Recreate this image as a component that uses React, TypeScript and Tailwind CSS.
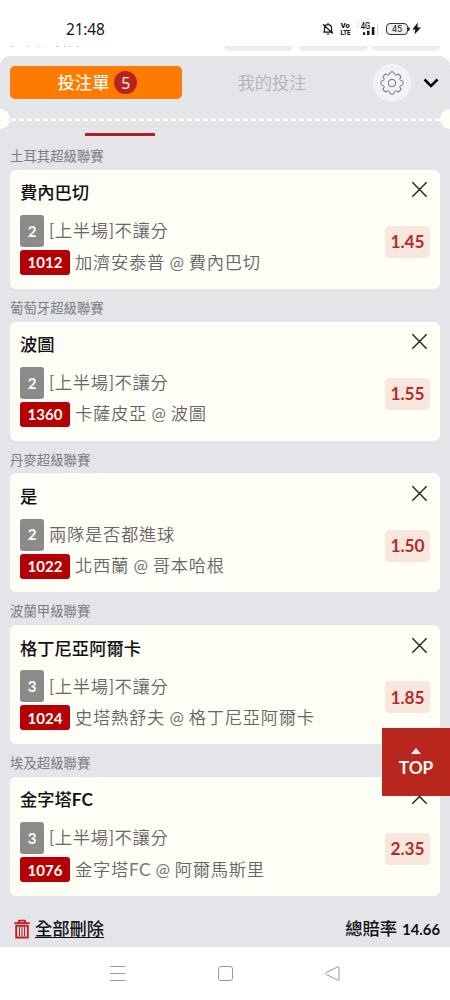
import React from "react";

type Bet = {
  league: string;
  pick: string;
  count: number;
  market: string;
  code: string;
  match: string;
  odds: string;
};

const bets: Bet[] = [
  { league: "土耳其超級聯賽", pick: "費內巴切", count: 2, market: "[上半場]不讓分", code: "1012", match: "加濟安泰普 @ 費內巴切", odds: "1.45" },
  { league: "葡萄牙超級聯賽", pick: "波圖", count: 2, market: "[上半場]不讓分", code: "1360", match: "卡薩皮亞 @ 波圖", odds: "1.55" },
  { league: "丹麥超級聯賽", pick: "是", count: 2, market: "兩隊是否都進球", code: "1022", match: "北西蘭 @ 哥本哈根", odds: "1.50" },
  { league: "波蘭甲級聯賽", pick: "格丁尼亞阿爾卡", count: 3, market: "[上半場]不讓分", code: "1024", match: "史塔熱舒夫 @ 格丁尼亞阿爾卡", odds: "1.85" },
  { league: "埃及超級聯賽", pick: "金字塔FC", count: 3, market: "[上半場]不讓分", code: "1076", match: "金字塔FC @ 阿爾馬斯里", odds: "2.35" },
];

// Latin runs take their own weight beside the Chinese text.
function Mixed({ text, latin }: { text: string; latin: string }) {
  return (
    <>
      {text.split(/([\x21-\x7e]+)/).map((part, i) =>
        i % 2 ? (
          <span key={i} className={latin}>
            {part}
          </span>
        ) : (
          part
        ),
      )}
    </>
  );
}

function StatusBar() {
  return (
    <div className="flex h-[46px] shrink-0 items-start bg-white pt-[19px] pl-[66px] text-[#171717]">
      <span className="w-[256px] font-['Noto_Sans','Noto_Sans_CJK_TC',sans-serif] text-[15.5px] leading-5 tracking-[-0.2px]">21:48</span>
      <svg className="mt-[3px] h-[14px] w-[12px]" viewBox="0 0 12 14" fill="none" stroke="currentColor" strokeWidth="1.2">
        <path d="M1.2 10.2h9.6M2.5 9.8V6.2C2.5 4 4 2.6 6 2.6s3.5 1.4 3.5 3.6v3.6M6 2.5V1M4.7 12h2.6M1 2.2l9.8 9.3" />
      </svg>
      <svg className="mt-[3px] ml-[6px] h-[17px] w-[11px] overflow-visible" viewBox="0 0 11 17" fill="currentColor" fontFamily="Roboto" fontWeight="900" fontSize="8">
        <text x="0.8" y="6.3" textLength="9" lengthAdjust="spacingAndGlyphs">Vo</text>
        <text x="0.5" y="13" textLength="10" lengthAdjust="spacingAndGlyphs">LTE</text>
      </svg>
      <svg className="mt-[2px] ml-[5px] h-[16px] w-[24px]" viewBox="0 0 24 16">
        <text x="4.8" y="7.6" fontFamily="Roboto" fontSize="9" fontWeight="500" fill="currentColor" textLength="9.5" lengthAdjust="spacingAndGlyphs">4G</text>
        <path d="M7 11.3h2.2V14H7zM11 9.7h2.5V14H11zM15.8 6h2.6v8h-2.6z" fill="currentColor" />
        <path d="M21 3h1v11h-1zM0 2.5h3v.8H0zM0 5h3v.8H0z" fill="#d0d0d0" />
      </svg>
      <div className="mt-[4px] ml-[6px] flex h-[12px] w-[22px] items-center justify-center rounded-[4px] border border-[#333] bg-[#eee] font-['Roboto',sans-serif] text-[9px] leading-none">45</div>
      <div className="mt-[8px] h-[4px] w-[1.5px] rounded-r bg-[#333]" />
      <svg className="mt-[3px] ml-[2px] h-[13px] w-[9px]" viewBox="0 0 9 13" fill="currentColor">
        <path d="M5.8.5.3 7.4h3L2.5 12.5 9 5.4H5.5z" />
      </svg>
    </div>
  );
}

function Gear() {
  return (
    <svg className="size-[24px]" viewBox="-12 -12 24 24" fill="none" stroke="#707278" strokeWidth="1" strokeLinejoin="round">
      {[0, 45, 90, 135, 180, 225, 270, 315].map((angle) => (
        <path key={angle} transform={`rotate(${angle})`} d="M-3.37-8.13Q-2.6-8.3-2.4-9L-2-10.5Q-1.8-11-1.3-11H1.3Q1.8-11 2-10.5L2.4-9Q2.6-8.3 3.37-8.13" />
      ))}
      <circle r="3.7" />
    </svg>
  );
}

function BetCard({ bet }: { bet: Bet }) {
  return (
    <section className="h-[151.8px]">
      <h3 className="h-[32.8px] pt-[9px] text-[13.4px] leading-[20px] text-[#7b7c81]">{bet.league}</h3>
      <div className="flex h-[119px] justify-between rounded-[6px] bg-[#fffef6] pr-[10px] pl-[10px]">
        <div className="pt-[10.4px]">
          <div className="h-[34.8px] text-[17.3px] leading-[25px] font-medium text-[#111]">
            <Mixed text={bet.pick} latin="font-bold" />
          </div>
          <div className="flex h-[32px] items-center">
            <span className="flex h-[32px] w-[24px] items-center justify-center rounded-[3px] bg-[#8b8b8b] text-[15px] font-bold text-[#fffef6]">{bet.count}</span>
            <span className="ml-[5px] text-[17.3px] font-[350] tracking-[0.7px] text-[#666]">
              <Mixed text={bet.market} latin="font-normal text-[#777] tracking-[0.5px]" />
            </span>
          </div>
          <div className="mt-[3px] flex h-[25px] items-center">
            <span className="flex h-[25px] w-[50px] items-center justify-center rounded-[3px] bg-[#b40004] text-[15px] font-bold text-[#fffef6]">{bet.code}</span>
            <span className="ml-[5px] text-[17.3px] font-[350] tracking-[0.7px] [word-spacing:-0.9px] whitespace-nowrap text-[#666]">
              <Mixed text={bet.match} latin="font-normal text-[#777] tracking-[0.4px]" />
            </span>
          </div>
        </div>
        <div className="flex flex-col items-end pt-[12.4px]">
          <button className="mr-[2px] flex h-[15px] w-[17px] items-center justify-center" aria-label="移除">
            <svg className="size-[17px] shrink-0" viewBox="0 0 17 17" stroke="#222" strokeWidth="1.4">
              <path d="M1.3 1.3l14.4 14.4M15.7 1.3L1.3 15.7" />
            </svg>
          </button>
          <span className="mt-[28.8px] flex h-[32px] w-[45px] items-center justify-center rounded-[4px] bg-[#f8e7df] text-[17.3px] font-bold text-[#b42d28]">{bet.odds}</span>
        </div>
      </div>
    </section>
  );
}

export default function App() {
  return (
    <div className="relative flex h-[1000px] w-[450px] flex-col overflow-hidden bg-white font-['Lato','Noto_Sans_CJK_TC',sans-serif]">
      <StatusBar />
      <div className="flex h-[10px] shrink-0">
        <svg className="h-[2px] w-[225px]" viewBox="0 0 225 2" fill="#ccc">
          <path d="M11 0h3v1h-3zM27 0h2v1h-2zM37 0h2v1h-2zM45 0h1v1h-1zM56 0h3v1h-3zM64 0h2v1h-2zM69 0h2v1h-2zM76 0h3v1h-3z" />
        </svg>
        <div className="flex gap-[5px]">
          <div className="h-[5px] w-[68px] rounded-b-[5px] bg-[#ececec]" />
          <div className="h-[5px] w-[69px] rounded-b-[5px] bg-[#ececec]" />
          <div className="h-[5px] w-[68px] rounded-b-[5px] bg-[#ececec]" />
        </div>
      </div>
      <main className="flex h-[890.5px] shrink-0 flex-col rounded-t-[10px] bg-[#e4e5e9]">
        <header className="flex h-[53px] shrink-0 items-center pl-[10px]">
          <button className="flex h-[33px] w-[172px] items-center justify-center gap-[5px] rounded-[5px] bg-[#ff7a00] pl-[3px] text-[17.3px] font-medium text-[#fff9ed]">
            投注單
            <span className="flex size-[23px] items-center justify-center rounded-full bg-[#b9231d] font-['Noto_Sans',sans-serif] text-[16px] font-normal">5</span>
          </button>
          <button className="w-[180px] text-center text-[17.3px] font-[350] text-[#b0b1b5]">我的投注</button>
          <button className="ml-[11px] flex size-[38px] items-center justify-center rounded-full bg-[#f1f2f7]"><Gear /></button>
          <svg className="ml-[11.5px] h-[10px] w-[16px]" viewBox="0 0 16 10" fill="none" stroke="#000" strokeWidth="2.5">
            <path d="M1.5 1.5 8 8l6.5-6.5" />
          </svg>
        </header>
        <div className="flex h-[20px] shrink-0 items-center">
          <div className="h-[20px] w-[10px] rounded-r-full bg-[#fffef6]" />
          <svg className="h-[4px] w-[430px]" viewBox="0 0 430 4"><path d="M1 2.8H430" stroke="#fffef6" strokeWidth="2.4" strokeDasharray="5 3" /></svg>
          <div className="h-[20px] w-[10px] rounded-l-full bg-[#fffef6]" />
        </div>
        <div className="mt-[4.4px] mb-[-0.7px] ml-[85px] h-[3px] w-[70px] shrink-0 bg-[#b1202a]" />
        <div className="mt-[1.4px] px-[10px]">
          {bets.map((bet) => (
            <BetCard key={bet.code} bet={bet} />
          ))}
        </div>
        <footer className="flex flex-1 items-center justify-between px-[10px] pt-[15px] text-[17.3px] font-medium text-[#111]">
          <button className="flex items-center">
            <svg className="ml-[4px] h-[20px] w-[16px]" viewBox="0 0 16 20" fill="none" stroke="#c31d22">
              <path d="M.3 4.2h15.4M5 4V1.6h6V4" strokeWidth="1.7" />
              <path d="M2.2 6.7v11.8h11.6V6.7z" strokeWidth="1.9" />
              <path d="M5.5 8v9M8 8v9M10.5 8v9" strokeWidth="1.1" />
            </svg>
            <span className="ml-[5px] underline decoration-1 underline-offset-[2px]">全部刪除</span>
          </button>
          <span className="flex items-baseline gap-[5px]">
            總賠率 <span className="text-[14.8px] font-bold">14.66</span>
          </span>
        </footer>
      </main>
      <nav className="flex flex-1 items-center justify-between pr-[109px] pl-[109px]">
        <svg className="h-[17px] w-[17px]" viewBox="0 0 17 17" stroke="#999" strokeWidth="1"><path d="M1 1.5h15.5M1 8.5h15.5M1 15.5h15.5" /></svg>
        <div className="size-[15px] rounded-[3px] border border-[#999]" />
        <svg className="h-[17px] w-[17px]" viewBox="0 0 17 17" fill="none" stroke="#999" strokeLinejoin="round"><path d="M14 1.7 2 7.7q-1 .8 0 1.6L14 15.3q1 .2 1-.8v-12q0-1-1-.8z" /></svg>
      </nav>
      <button className="absolute top-[728px] right-0 flex h-[68px] w-[68px] flex-col items-center bg-[#b9261e] pt-[20px] text-[#fff9ed]">
        <svg className="h-[6px] w-[10px]" viewBox="0 0 10 6" fill="currentColor"><path d="M5 0l5 6H0z" /></svg>
        <span className="mt-[2px] text-[17.3px] leading-[24px] font-bold">TOP</span>
      </button>
    </div>
  );
}
